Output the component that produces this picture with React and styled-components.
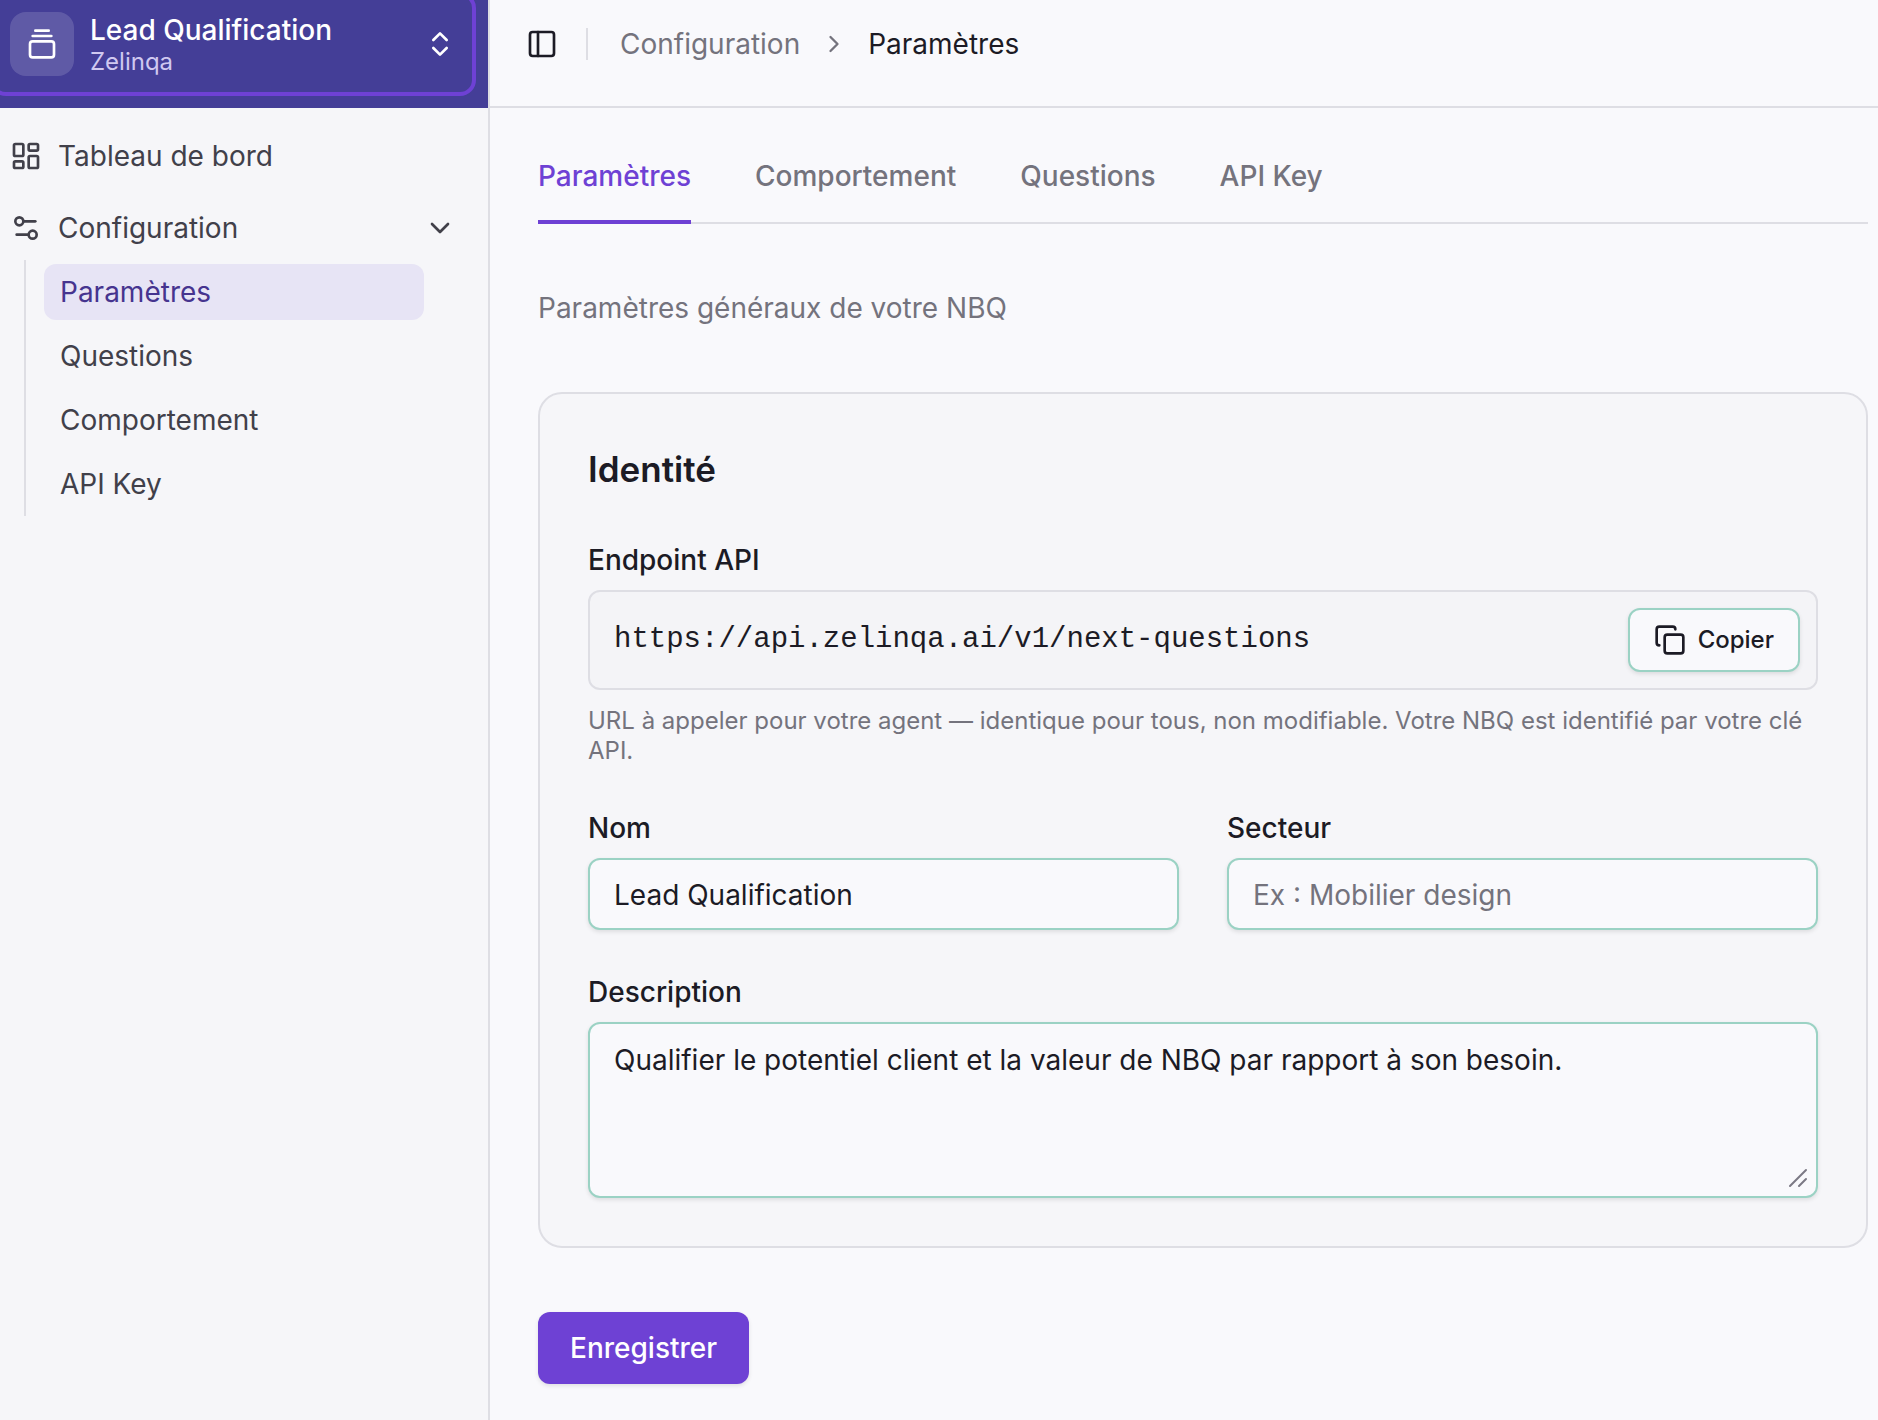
import React, { useState } from "react";
import styled, { createGlobalStyle } from "styled-components";
import {
    ChevronDown,
    ChevronRight,
    ChevronsUpDown,
    Copy,
    GalleryVerticalEnd,
    LayoutDashboard,
    PanelLeft,
    Settings2,
} from "lucide-react";

const colors = {
    page: "#f9f9fc",
    surface: "#f6f6f9",
    muted: "#f4f4f7",
    border: "#dedee4",
    inputBorder: "#9bd2c4",
    primary: "#6e41d4",
    brand: "#443e97",
    active: "#e7e4f5",
    activeText: "#46348f",
    text: "#1c1b25",
    textMuted: "#74737d",
    sidebarText: "#41404a",
};

const GlobalStyle = createGlobalStyle`
    *, *::before, *::after {
        box-sizing: border-box;
    }
    body {
        margin: 0;
        background: ${colors.page};
        color: ${colors.text};
        font-family: Inter, "Liberation Sans", sans-serif;
        font-size: 28px;
        line-height: 40px;
    }
    button, input, textarea {
        font: inherit;
        color: inherit;
    }
    a {
        color: inherit;
        text-decoration: none;
    }
    svg {
        flex-shrink: 0;
    }
`;

const Layout = styled.div`
    display: flex;
    min-height: 100vh;
`;

const Sidebar = styled.aside`
    flex: 0 0 490px;
    overflow: hidden;
    background: ${colors.surface};
    border-right: 2px solid ${colors.border};
`;

const SidebarHeader = styled.div`
    display: flex;
    height: 108px;
    padding-right: 12px;
    background: ${colors.brand};
`;

const Switcher = styled.button`
    display: flex;
    flex: 1;
    align-items: center;
    gap: 16px;
    height: 104px;
    margin: -8px 0 0 -10px;
    padding: 0 16px;
    border: 4px solid ${colors.primary};
    border-radius: 16px;
    background: transparent;
    color: #fff;
    text-align: left;
`;

const SwitcherIcon = styled.span`
    display: flex;
    align-items: center;
    justify-content: center;
    width: 64px;
    height: 64px;
    border-radius: 16px;
    background: rgba(255, 255, 255, 0.15);
`;

const SwitcherText = styled.span`
    display: grid;
    flex: 1;
    padding-top: 4px;
    line-height: 32px;

    strong {
        font-weight: 500;
    }
    small {
        color: #d0c8f0;
        font-size: 24px;
    }
`;

const Menu = styled.nav`
    display: flex;
    flex-direction: column;
    gap: 8px;
    padding: 16px 16px 16px 0;
    color: ${colors.sidebarText};
`;

const menuRow = `
    display: flex;
    align-items: center;
    gap: 16px;
    height: 64px;
    padding: 0 16px 0 10px;
`;

const MenuLink = styled.a`
    ${menuRow}
`;

const MenuToggle = styled.button`
    ${menuRow}
    width: 100%;
    border: 0;
    background: transparent;
    text-align: left;

    span {
        flex: 1;
    }
`;

const SubMenu = styled.div`
    display: flex;
    flex-direction: column;
    gap: 8px;
    margin: 0 48px 0 24px;
    padding: 4px 0 4px 18px;
    border-left: 2px solid ${colors.border};
`;

const SubLink = styled.a`
    height: 56px;
    padding: 8px 16px;
    border-radius: 12px;
    background: ${props => (props.$active ? colors.active : "transparent")};
    color: ${props => (props.$active ? colors.activeText : "inherit")};
`;

const Main = styled.main`
    flex: 1;
    min-width: 0;
`;

const TopBar = styled.header`
    display: flex;
    align-items: center;
    height: 108px;
    padding: 0 36px 18px;
    border-bottom: 2px solid ${colors.border};
`;

const IconButton = styled.button`
    display: flex;
    padding: 0;
    border: 0;
    background: transparent;
`;

const Separator = styled.span`
    width: 2px;
    height: 32px;
    margin: 0 32px 0 28px;
    background: ${colors.border};
`;

const Breadcrumb = styled.nav`
    display: flex;
    align-items: center;
    gap: 20px;
    color: ${colors.textMuted};

    span {
        color: ${colors.text};
    }
`;

const Content = styled.div`
    display: flex;
    flex-direction: column;
    gap: 64px;
    padding: 48px 10px 36px 48px;
`;

const Tabs = styled.nav`
    display: flex;
    gap: 64px;
    border-bottom: 2px solid ${colors.border};
`;

const Tab = styled.a`
    margin-bottom: -2px;
    padding-bottom: 24px;
    border-bottom: 4px solid ${props => (props.$active ? colors.primary : "transparent")};
    color: ${props => (props.$active ? colors.primary : colors.textMuted)};
    font-weight: 500;
`;

const Intro = styled.p`
    margin: 0;
    color: ${colors.textMuted};
`;

const Card = styled.section`
    padding: 48px;
    border: 2px solid ${colors.border};
    border-radius: 24px;
    background: ${colors.surface};
`;

const CardTitle = styled.h2`
    margin: 0 0 50px;
    font-size: 35px;
    font-weight: 600;
    line-height: 54px;
`;

const Fields = styled.div`
    display: grid;
    grid-template-columns: 1fr 1fr;
    gap: 48px;
`;

const Field = styled.div`
    display: flex;
    flex-direction: column;
    gap: 16px;
    grid-column: ${props => (props.$wide ? "1 / -1" : "auto")};

    label {
        font-weight: 500;
        line-height: 28px;
    }
`;

const Endpoint = styled.div`
    display: flex;
    align-items: center;
    gap: 16px;
    padding: 16px 16px 16px 24px;
    border: 2px solid ${colors.border};
    border-radius: 12px;
    background: ${colors.muted};

    input {
        flex: 1;
        min-width: 0;
        padding: 0;
        border: 0;
        outline: 0;
        background: transparent;
        font-family: "Liberation Mono", monospace;
        font-size: 29px;
    }
`;

const CopyButton = styled.button`
    display: flex;
    align-items: center;
    gap: 12px;
    height: 64px;
    padding: 0 24px;
    border: 2px solid ${colors.inputBorder};
    border-radius: 12px;
    background: ${colors.page};
    box-shadow: 0 2px 4px rgba(0, 0, 0, 0.1);
    font-size: 24px;
    font-weight: 500;
`;

const Help = styled.p`
    margin: 0;
    color: ${colors.textMuted};
    font-size: 24px;
    line-height: 30px;
`;

const inputBox = `
    display: block;
    width: 100%;
    border: 2px solid ${colors.inputBorder};
    border-radius: 12px;
    outline: 0;
    background: ${colors.page};
    box-shadow: 0 2px 4px rgba(0, 0, 0, 0.1);
`;

const Input = styled.input`
    ${inputBox}
    height: 72px;
    padding: 2px 24px 0;

    &::placeholder {
        color: ${colors.textMuted};
        opacity: 1;
    }
`;

const TextAreaWrap = styled.div`
    position: relative;

    svg {
        position: absolute;
        right: 8px;
        bottom: 8px;
        pointer-events: none;
    }
`;

const TextArea = styled.textarea`
    ${inputBox}
    height: 176px;
    padding: 16px 24px;
    resize: vertical;

    &::-webkit-resizer {
        display: none;
    }
`;

const SaveButton = styled.button`
    align-self: flex-start;
    height: 72px;
    padding: 0 32px;
    border: 0;
    border-radius: 12px;
    background: ${colors.primary};
    box-shadow: 0 2px 4px rgba(0, 0, 0, 0.1);
    color: #fff;
    font-weight: 500;
`;

const links = ["Paramètres", "Questions", "Comportement", "API Key"];
const tabs = ["Paramètres", "Comportement", "Questions", "API Key"];

const AppSidebar = () => {
    const [open, setOpen] = useState(true);

    return (
        <Sidebar>
            <SidebarHeader>
                <Switcher type="button">
                    <SwitcherIcon>
                        <GalleryVerticalEnd size={32} />
                    </SwitcherIcon>
                    <SwitcherText>
                        <strong>Lead Qualification</strong>
                        <small>Zelinqa</small>
                    </SwitcherText>
                    <ChevronsUpDown size={32} />
                </Switcher>
            </SidebarHeader>
            <Menu aria-label="Navigation">
                <MenuLink href="#dashboard">
                    <LayoutDashboard size={32} />
                    Tableau de bord
                </MenuLink>
                <div>
                    <MenuToggle type="button" aria-expanded={open} onClick={() => setOpen(!open)}>
                        <Settings2 size={32} />
                        <span>Configuration</span>
                        <ChevronDown size={32} />
                    </MenuToggle>
                    {open && (
                        <SubMenu>
                            {links.map((name, i) => (
                                <SubLink key={name} href="#config" $active={i === 0}>
                                    {name}
                                </SubLink>
                            ))}
                        </SubMenu>
                    )}
                </div>
            </Menu>
        </Sidebar>
    );
};

const App = () => {
    const [name, setName] = useState("Lead Qualification");
    const [sector, setSector] = useState("");
    const [description, setDescription] = useState(
        "Qualifier le potentiel client et la valeur de NBQ par rapport à son besoin."
    );

    return (
        <Layout>
            <GlobalStyle />
            <AppSidebar />
            <Main>
                <TopBar>
                    <IconButton type="button" aria-label="Menu">
                        <PanelLeft size={32} />
                    </IconButton>
                    <Separator />
                    <Breadcrumb>
                        <a href="#config">Configuration</a>
                        <ChevronRight size={28} />
                        <span>Paramètres</span>
                    </Breadcrumb>
                </TopBar>
                <Content>
                    <Tabs>
                        {tabs.map((tab, i) => (
                            <Tab key={tab} href="#tab" $active={i === 0}>
                                {tab}
                            </Tab>
                        ))}
                    </Tabs>
                    <Intro>Paramètres généraux de votre NBQ</Intro>
                    <Card>
                        <CardTitle>Identité</CardTitle>
                        <Fields>
                            <Field $wide>
                                <label htmlFor="endpoint">Endpoint API</label>
                                <Endpoint>
                                    <input
                                        id="endpoint"
                                        readOnly
                                        value="https://api.zelinqa.ai/v1/next-questions"
                                    />
                                    <CopyButton type="button">
                                        <Copy size={32} />
                                        Copier
                                    </CopyButton>
                                </Endpoint>
                                <Help>
                                    URL à appeler pour votre agent — identique pour tous, non modifiable.
                                    Votre NBQ est identifié par votre clé API.
                                </Help>
                            </Field>
                            <Field>
                                <label htmlFor="name">Nom</label>
                                <Input id="name" value={name} onChange={e => setName(e.target.value)} />
                            </Field>
                            <Field>
                                <label htmlFor="sector">Secteur</label>
                                <Input
                                    id="sector"
                                    placeholder="Ex : Mobilier design"
                                    value={sector}
                                    onChange={e => setSector(e.target.value)}
                                />
                            </Field>
                            <Field $wide>
                                <label htmlFor="description">Description</label>
                                <TextAreaWrap>
                                    <TextArea
                                        id="description"
                                        value={description}
                                        onChange={e => setDescription(e.target.value)}
                                    />
                                    {/* resize grip */}
                                    <svg width="22" height="22" fill="none" stroke="#7b7984" strokeWidth="2" strokeLinecap="round">
                                        <path d="M2 18 18 2M11 18l7-7" />
                                    </svg>
                                </TextAreaWrap>
                            </Field>
                        </Fields>
                    </Card>
                    <SaveButton type="button">Enregistrer</SaveButton>
                </Content>
            </Main>
        </Layout>
    );
};

export default App;
